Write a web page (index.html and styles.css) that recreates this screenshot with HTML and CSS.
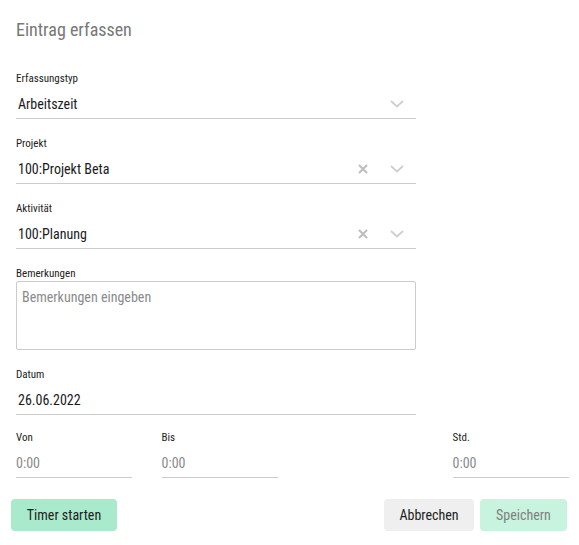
FILE: index.html
```html
<!DOCTYPE html>
<html lang="de">
<head>
<meta charset="utf-8">
<title>Eintrag erfassen</title>
<link rel="stylesheet" href="styles.css">
</head>
<body>
<div class="dialog">
  <h1 class="title">Eintrag erfassen</h1>

  <div class="field field-first">
    <div class="label">Erfassungstyp</div>
    <div class="control">
      <span class="value">Arbeitszeit</span>
      <span class="icons">
        <svg class="chev" width="14" height="8" viewBox="0 0 14 8"><path d="M1 1l6 5.5L13 1" fill="none" stroke="#cfcfcf" stroke-width="1.8"/></svg>
      </span>
    </div>
  </div>

  <div class="field">
    <div class="label">Projekt</div>
    <div class="control">
      <span class="value">100:Projekt Beta</span>
      <span class="icons">
        <svg class="clear" width="10" height="10" viewBox="0 0 10 10"><path d="M1 1l8 8M9 1l-8 8" stroke="#bdbdbd" stroke-width="2"/></svg>
        <svg class="chev" width="14" height="8" viewBox="0 0 14 8"><path d="M1 1l6 5.5L13 1" fill="none" stroke="#cfcfcf" stroke-width="1.8"/></svg>
      </span>
    </div>
  </div>

  <div class="field">
    <div class="label">Aktivität</div>
    <div class="control">
      <span class="value">100:Planung</span>
      <span class="icons">
        <svg class="clear" width="10" height="10" viewBox="0 0 10 10"><path d="M1 1l8 8M9 1l-8 8" stroke="#bdbdbd" stroke-width="2"/></svg>
        <svg class="chev" width="14" height="8" viewBox="0 0 14 8"><path d="M1 1l6 5.5L13 1" fill="none" stroke="#cfcfcf" stroke-width="1.8"/></svg>
      </span>
    </div>
  </div>

  <div class="field">
    <div class="label">Bemerkungen</div>
    <div class="textarea"><span class="placeholder">Bemerkungen eingeben</span></div>
  </div>

  <div class="field">
    <div class="label">Datum</div>
    <div class="control">
      <span class="value">26.06.2022</span>
    </div>
  </div>

  <div class="times">
    <div class="field">
      <div class="label">Von</div>
      <div class="control"><span class="placeholder">0:00</span></div>
    </div>
    <div class="field">
      <div class="label">Bis</div>
      <div class="control"><span class="placeholder">0:00</span></div>
    </div>
    <div></div>
    <div class="field">
      <div class="label">Std.</div>
      <div class="control"><span class="placeholder">0:00</span></div>
    </div>
  </div>

  <div class="actions">
    <button class="btn btn-timer">Timer starten</button>
    <div class="right">
      <button class="btn btn-cancel">Abbrechen</button>
      <button class="btn btn-save">Speichern</button>
    </div>
  </div>
</div>
</body>
</html>
```

FILE: styles.css
```css
* { box-sizing: border-box; }
html, body {
  margin: 0;
  padding: 0;
  background: #ffffff;
}
body {
  font-family: "Roboto Condensed", "Liberation Sans Narrow", Roboto, "Liberation Sans", sans-serif;
  font-stretch: condensed;
  color: #222222;
}
.dialog {
  width: 579px;
  padding: 18px 12px 0 11px;
}
.title {
  margin: 0 0 0 5px;
  font-size: 18px;
  line-height: 24px;
  font-weight: 400;
  color: #777777;
}
.field {
  width: 400px;
  margin-left: 5px;
  margin-top: 18px;
}
.field-first { margin-top: 30px; }
.label {
  font-size: 11px;
  line-height: 14px;
  color: #222222;
}
.control {
  height: 33px;
  padding: 5px 2px 0 2px;
  display: flex;
  align-items: center;
  border-bottom: 1px solid #cccccc;
}
.value {
  flex: 1;
  font-size: 14px;
  line-height: 27px;
  color: #1a1a1a;
}
.placeholder {
  font-size: 14px;
  line-height: 27px;
  color: #8a8a8a;
}
.icons {
  display: flex;
  align-items: center;
  gap: 22px;
  margin-right: 10px;
  margin-top: -1px;
}
.chev { display: block; }
.clear { display: block; }
.textarea {
  margin-top: 0;
  height: 69px;
  border: 1px solid #cccccc;
  border-radius: 2px;
  padding: 2px 5px;
}
.times {
  display: grid;
  grid-template-columns: repeat(4, 116px);
  column-gap: 29.5px;
  margin-left: 5px;
  margin-top: 16px;
}
.times .field {
  width: auto;
  margin: 0;
}
.times .control {
  height: 33px;
  padding-left: 0;
}
.actions {
  display: flex;
  justify-content: space-between;
  margin-top: 21px;
}
.right {
  display: flex;
  gap: 6px;
}
.btn {
  font-family: inherit;
  font-stretch: condensed;
  height: 32px;
  border: none;
  border-radius: 4px;
  font-size: 14px;
  padding: 0;
  white-space: nowrap;
  color: #222222;
  cursor: pointer;
}
.btn-timer { background: #a9eacc; width: 106px; }
.btn-cancel { background: #efefef; width: 90px; }
.btn-save { background: #c8f3df; color: #808080; width: 87px; }
```
